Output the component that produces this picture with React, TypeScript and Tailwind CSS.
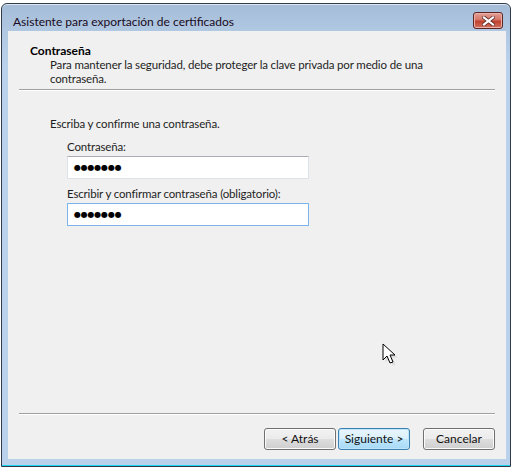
import React from "react";

const font = { fontFamily: 'Lato, "Noto Sans", "DejaVu Sans", sans-serif' };

function PasswordBox({ focused }: { focused?: boolean }) {
  return (
    <div
      className={
        "ml-[59px] h-[23px] w-[242px] flex items-center pl-[6px] bg-white border " +
        (focused
          ? "border-[#7eb4ea]"
          : "border-[#dde3ea] border-t-[#abadb3]")
      }
    >
      <span
        className="text-[8px] leading-none tracking-[-0.2px] text-black"
        style={{ fontFamily: '"DejaVu Sans", sans-serif' }}
      >
        ●●●●●●●
      </span>
    </div>
  );
}

function WizButton({ label, focused }: { label: string; focused?: boolean }) {
  return (
    <button
      className={
        "h-[22px] w-[72px] rounded-[3px] border text-[12px] leading-none text-[#111] " +
        (focused
          ? "border-[#3c7fb1] bg-[linear-gradient(#eaf6fd_0%,#d9f0fc_50%,#bee6fd_51%,#a7d9f5_100%)] shadow-[inset_0_0_0_1px_#bfe6f8]"
          : "border-[#707070] bg-[linear-gradient(#f2f2f2_0%,#ebebeb_50%,#dddddd_51%,#cfcfcf_100%)] shadow-[inset_0_0_0_1px_#fbfbfb]")
      }
    >
      {label}
    </button>
  );
}

export default function App() {
  return (
    <div className="relative w-[514px] h-[469px] overflow-hidden bg-white" style={font}>
      {/* explorer window peeking behind */}
      <div className="h-[3px] bg-white" />
      <div className="ml-[1px] w-[510px] h-[464px] rounded-t-[6px] border border-[#2f3b4a] bg-[linear-gradient(#a4bcd7_0px,#b0c8e2_28px,#b9d1ea_60px,#b9d1ea_100%)] flex flex-col shadow-[inset_0_1px_0_#dce8f4]">
        {/* title bar */}
        <div className="h-[27px] flex items-start justify-between pl-[11px] pr-[7px]">
          <span className="mt-[10px] text-[12px] leading-[16px] text-[#1a0a22]">
            Asistente para exportación de certificados
          </span>
          <div className="mt-[8px] w-[30px] h-[17px] rounded-[3px] border border-[#5d2424] bg-[linear-gradient(#e6a197_0%,#d47466_45%,#c0412f_55%,#d2705f_100%)] flex items-center justify-center shadow-[inset_0_0_0_1px_#eab3aa]">
            <svg width="13" height="10" viewBox="0 0 13 10">
              <path
                d="M2 1.5 L11 8.5 M11 1.5 L2 8.5"
                stroke="#5a2a2a"
                strokeWidth="3.6"
                strokeLinecap="square"
              />
              <path
                d="M2 1.5 L11 8.5 M11 1.5 L2 8.5"
                stroke="#ffffff"
                strokeWidth="2.2"
                strokeLinecap="square"
              />
            </svg>
          </div>
        </div>
        {/* client area */}
        <div className="ml-[6px] mr-[4px] h-[428px] bg-[#f0f0f0] flex flex-col text-[11.5px] tracking-[-0.15px] text-[#1e1e1e]">
          <div className="h-[58px] flex flex-col">
            <div className="ml-[22px] mt-[12px] font-bold text-[12px] tracking-normal leading-[16px] text-black">Contraseña</div>
            <div className="ml-[42px] mt-[-1px] w-[430px] leading-[14px]">
              Para mantener la seguridad, debe proteger la clave privada por medio de una
              <br />
              contraseña.
            </div>
          </div>
          <div className="mx-[11px] h-[2px] border-t border-[#a0a0a0] border-b border-b-white" />
          <div className="flex flex-col h-[322px]">
            <div className="ml-[42px] mt-[25px] leading-[16px]">Escriba y confirme una contraseña.</div>
            <div className="ml-[59px] mt-[7px] leading-[16px]">Contraseña:</div>
            <div className="mt-[1px]">
              <PasswordBox />
            </div>
            <div className="ml-[59px] mt-[7px] leading-[16px]">Escribir y confirmar contraseña (obligatorio):</div>
            <div className="mt-[1px]">
              <PasswordBox focused />
            </div>
          </div>
          <div className="mx-[11px] h-[2px] border-t border-[#a0a0a0] border-b border-b-white" />
          <div className="mt-[13px] flex justify-end pr-[11px] tracking-normal">
            <WizButton label="< Atrás" />
            <div className="w-[2px]" />
            <WizButton label="Siguiente >" focused />
            <div className="w-[13px]" />
            <WizButton label="Cancelar" />
          </div>
        </div>
        <div className="flex-1" />
        <div className="h-[1px] bg-[#19d6f0]" />
      </div>
      {/* mouse pointer */}
      <svg className="absolute left-[382px] top-[343px]" width="16" height="24" viewBox="0 0 16 24">
        <path d="M2 2 L2 18 L6 14 L9 21 L12 20 L9 13 L14 13 Z" fill="#bbbbbb" opacity="0.35" transform="translate(1.5 1.5)" />
        <path d="M1 1 L1 17 L5 13 L8 20 L11 19 L8 12 L13 12 Z" fill="#ffffff" stroke="#000000" strokeWidth="1" strokeLinejoin="miter" />
      </svg>
    </div>
  );
}
